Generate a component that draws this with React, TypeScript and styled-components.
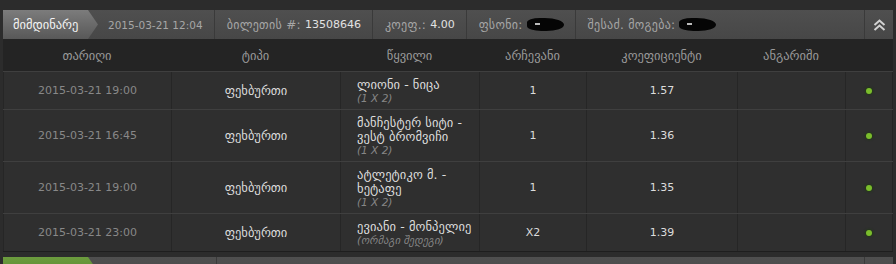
import styled, { createGlobalStyle } from "styled-components";

const GlobalStyle = createGlobalStyle`
  html, body {
    margin: 0;
    padding: 0;
    background: #2c2c2c;
  }
  body {
    font-family: "DejaVu Sans", "Noto Sans", sans-serif;
  }
`;

const Page = styled.div`
  width: 896px;
  height: 264px;
  overflow: hidden;
  box-sizing: border-box;
  padding: 10px 3px 0 3px;
  display: flex;
  flex-direction: column;
  gap: 5px;
`;

const Ticket = styled.section`
  display: flex;
  flex-direction: column;
  width: 890px;
  flex-shrink: 0;
`;

const HeaderBar = styled.div`
  display: flex;
  align-items: stretch;
  height: 29px;
  background: linear-gradient(#4f4f4f, #474747);
  font-size: 10.5px;
  flex-shrink: 0;
`;

const Tab = styled.div<{ $green?: boolean }>`
  width: 95px;
  flex-shrink: 0;
  display: flex;
  align-items: center;
  padding-left: 10px;
  box-sizing: border-box;
  color: #f4f4f4;
  font-size: 12.5px;
  background: ${(p) =>
    p.$green
      ? "linear-gradient(#6c9c3e, #4f7f2a)"
      : "linear-gradient(#7c7c7c, #585858)"};
  clip-path: polygon(0 0, 85px 0, 95px 50%, 85px 100%, 0 100%);
`;

const HeaderItem = styled.div<{ $first?: boolean; $last?: boolean }>`
  display: flex;
  align-items: center;
  gap: 4px;
  padding: 0 11px 0 ${(p) => (p.$first ? "10px" : "12px")};
  border-right: ${(p) => (p.$last ? "none" : "1px solid #3a3a3a")};
  color: #a6a6a6;
  white-space: nowrap;
`;

const Label = styled.span`
  font-size: 12px;
  letter-spacing: 0.3px;
`;

const HeaderValue = styled.span`
  color: #e2e2e2;
  font-size: 11px;
`;

const Blob = styled.span`
  display: inline-block;
  width: 37px;
  height: 13px;
  background: #050505;
  border-radius: 40% 60% 55% 45%;
  position: relative;

  &::before {
    content: "";
    position: absolute;
    left: 8px;
    top: 5px;
    width: 5px;
    height: 2px;
    background: #bbb;
  }
`;

const Spacer = styled.div`
  flex: 1;
`;

const BlankItem = styled.div`
  width: 118px;
  flex-shrink: 0;
  border-right: 1px solid #3a3a3a;
`;

const CollapseBox = styled.div`
  width: 28px;
  flex-shrink: 0;
  display: flex;
  align-items: center;
  justify-content: center;
  border-left: 1px solid #3a3a3a;
`;

const COLS = "168px 169px 139px 107px 151px 108px 48px";

const ColumnHead = styled.div`
  display: grid;
  grid-template-columns: ${COLS};
  height: 32px;
  background: #242424;
  color: #9a9a9a;
  font-size: 12.5px;
`;

const HeadCell = styled.div`
  display: flex;
  align-items: center;
  justify-content: center;
`;

const Row = styled.div<{ $last?: boolean }>`
  display: grid;
  grid-template-columns: ${COLS};
  background: #2f2f2f;
  border-top: 1px solid #3f3f3f;
  border-bottom: ${(p) => (p.$last ? "1px solid #1e1e1e" : "none")};
`;

const Cell = styled.div<{ $tone?: "dim" | "text" }>`
  display: flex;
  align-items: center;
  justify-content: center;
  border-left: 1px solid #262626;
  font-size: ${(p) => (p.$tone === "text" ? "12.5px" : "11px")};
  color: ${(p) => (p.$tone === "dim" ? "#888888" : "#dcdcdc")};

  &:last-child {
    border-right: 1px solid #242424;
  }
`;

const MatchCell = styled.div`
  display: flex;
  flex-direction: column;
  justify-content: center;
  padding: 6px 0 5px 16px;
  border-left: 1px solid #262626;
  overflow: hidden;
`;

const MatchName = styled.div`
  font-size: 12.5px;
  line-height: 14px;
  letter-spacing: 0.1px;
  color: #dedede;
  white-space: nowrap;
`;

const MatchSub = styled.div`
  font-size: 10.5px;
  line-height: 12px;
  font-style: italic;
  color: #868686;
  white-space: nowrap;
`;

const Dot = styled.span`
  width: 6px;
  height: 6px;
  border-radius: 50%;
  background: #7bbd2c;
  box-shadow: 0 0 2px 1px #24381a;
`;

const ChevronsUp = () => (
  <svg width="13" height="12" viewBox="0 0 13 12">
    <path
      d="M1.5 6 L6.5 1.5 L11.5 6 M1.5 11 L6.5 6.5 L11.5 11"
      fill="none"
      stroke="#d2d2d2"
      strokeWidth="2"
    />
  </svg>
);

const rows = [
  {
    date: "2015-03-21 19:00",
    match: ["ლიონი - ნიცა"],
    sub: "(1 X 2)",
    pick: "1",
    odds: "1.57",
  },
  {
    date: "2015-03-21 16:45",
    match: ["მანჩესტერ სიტი -", "ვესტ ბრომვიჩი"],
    sub: "(1 X 2)",
    pick: "1",
    odds: "1.36",
  },
  {
    date: "2015-03-21 19:00",
    match: ["ატლეტიკო მ. -", "ხეტაფე"],
    sub: "(1 X 2)",
    pick: "1",
    odds: "1.35",
  },
  {
    date: "2015-03-21 23:00",
    match: ["ევიანი - მონპელიე"],
    sub: "(ორმაგი შედეგი)",
    pick: "X2",
    odds: "1.39",
  },
];

const heads = ["თარიღი", "ტიპი", "წყვილი", "არჩევანი", "კოეფიციენტი", "ანგარიში", ""];

export default function App() {
  return (
    <>
      <GlobalStyle />
      <Page>
        <Ticket>
          <HeaderBar>
            <Tab>მიმდინარე</Tab>
            <HeaderItem $first>2015-03-21 12:04</HeaderItem>
            <HeaderItem>
              <Label>ბილეთის #:</Label> <HeaderValue>13508646</HeaderValue>
            </HeaderItem>
            <HeaderItem>
              <Label>კოეფ.:</Label> <HeaderValue>4.00</HeaderValue>
            </HeaderItem>
            <HeaderItem>
              <Label>ფსონი:</Label> <Blob />
            </HeaderItem>
            <HeaderItem $last>
              <Label>შესაძ. მოგება:</Label> <Blob />
            </HeaderItem>
            <Spacer />
            <CollapseBox>
              <ChevronsUp />
            </CollapseBox>
          </HeaderBar>
          <ColumnHead>
            {heads.map((h, i) => (
              <HeadCell key={i}>{h}</HeadCell>
            ))}
          </ColumnHead>
          {rows.map((r, i) => (
            <Row key={i} $last={i === rows.length - 1}>
              <Cell $tone="dim">{r.date}</Cell>
              <Cell $tone="text">ფეხბურთი</Cell>
              <MatchCell>
                {r.match.map((line) => (
                  <MatchName key={line}>{line}</MatchName>
                ))}
                <MatchSub>{r.sub}</MatchSub>
              </MatchCell>
              <Cell>{r.pick}</Cell>
              <Cell>{r.odds}</Cell>
              <Cell />
              <Cell>
                <Dot />
              </Cell>
            </Row>
          ))}
        </Ticket>
        <Ticket>
          {/* next ticket, only its top edge shows */}
          <HeaderBar>
            <Tab $green />
            <BlankItem />
            <Spacer />
            <CollapseBox />
          </HeaderBar>
        </Ticket>
      </Page>
    </>
  );
}
